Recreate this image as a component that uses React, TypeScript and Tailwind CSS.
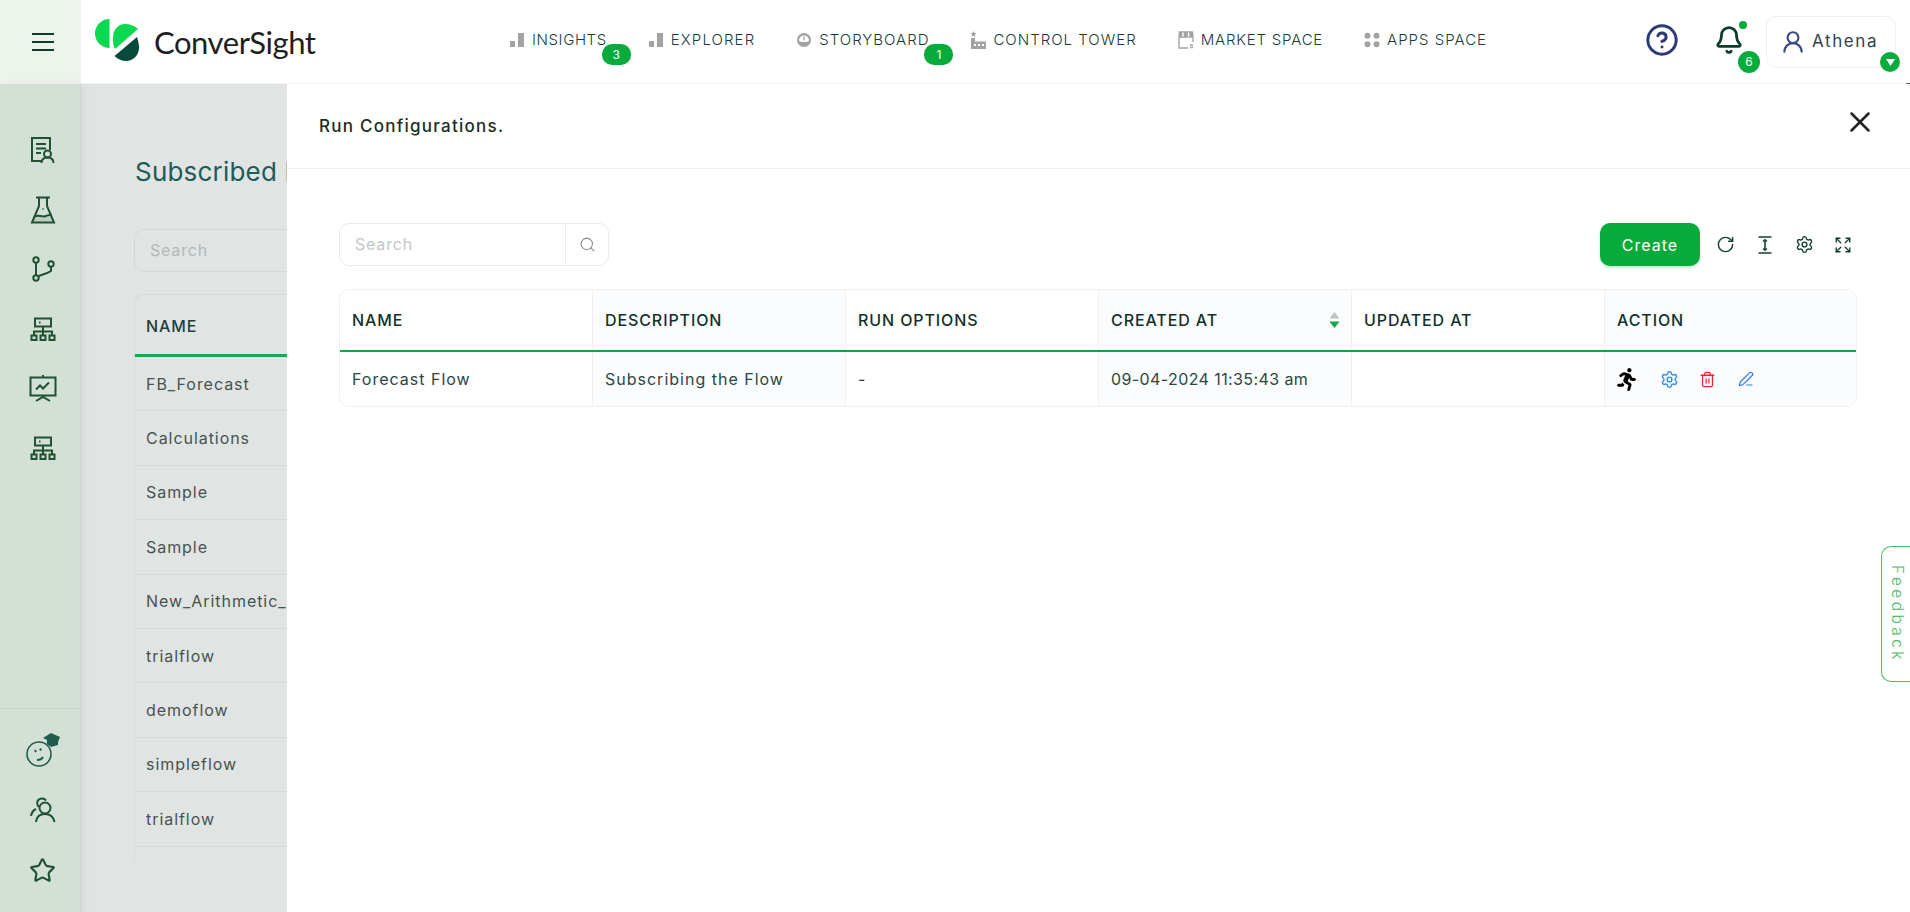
import React from "react";
import { CircleHelp, Bell, UserRound, X, Search, RotateCw, Settings, Expand, Trash2, PenLine, Star } from "lucide-react";
import { FaRunning } from "react-icons/fa";

const font = "font-['Inter','Noto_Sans',sans-serif]";
const sideStroke = "#1f5133";

function Logo() {
  return (
    <svg width="44" height="42" viewBox="0 0 44 42" className="shrink-0">
      <path d="M14.5 0A14.5 14.5 0 0 0 14.5 29Z" fill="#0bd94f" />
      <path d="M43 10C39 6.500 35 5 30 5C23 5 18 11 18 18C18 23 18 27 20 30Z" fill="#0bd94f" />
      <path d="M42 18L19.500 37C23 40.500 27 42 31 42C38 42 44 36 44 29C44 25 43 21 42 18Z" fill="#054a3a" />
    </svg>
  );
}

const Bars = () => (
  <svg width="16" height="16" viewBox="0 0 16 16" fill="#a3a3a3"><rect x="1" y="9" width="5" height="6" /><rect x="9" y="1" width="6" height="14" /></svg>
);
const Gauge = () => (
  <svg width="16" height="16" viewBox="0 0 16 16"><circle cx="8" cy="8" r="7" fill="#a3a3a3" /><path d="M3 8.500a5 5 0 0 1 10 0c0 1-3 1.500-5 1.500s-5-.5-5-1.500Z" fill="#fff" /><path d="M8 4.500v4" stroke="#a3a3a3" strokeWidth="1.300" /></svg>
);
const Factory = () => (
  <svg width="16" height="18" viewBox="0 0 16 18" fill="#a3a3a3"><path d="M3.500 0l1 2 2 .3-1.500 1.400.4 2.100-1.900-1-1.900 1 .4-2.100L.5 2.300l2-.3Z" /><path d="M1 7h4v3.500h11V18H1Zm3 6v2h2v-2Zm4 0v2h2v-2Zm4 0v2h2v-2Z" fillRule="evenodd" /></svg>
);
const Store = () => (
  <svg width="16" height="18" viewBox="0 0 16 18" fill="none" stroke="#a3a3a3" strokeWidth="1.400"><path d="M1 7v10h9M15 7v4" /><path d="M1.500 1h13l.5 5H1Z" fill="#a3a3a3" /><path d="M5 1.500v4M10.500 1.500v4" stroke="#fff" /><path d="M12 14h3M12 16.500h3" /></svg>
);
const Dots = () => (
  <svg width="16" height="16" viewBox="0 0 16 16" fill="#a3a3a3"><circle cx="3.500" cy="3.800" r="3" /><circle cx="12.500" cy="3.800" r="3" /><circle cx="3.500" cy="12.200" r="3" /><circle cx="12.500" cy="12.200" r="3" /></svg>
);

const Cert = () => (
  <svg width="26" height="28" viewBox="0 0 26 28" fill="none" stroke={sideStroke} strokeWidth="2"><path d="M11 25H2V2h18v12" /><path d="M6 8h10M6 12.500h10M6 17h5" /><circle cx="17.500" cy="18" r="3.500" /><path d="M11.500 27c0-3.500 2.500-5.500 6-5.500s6 2 6 5.500" /></svg>
);
const Flask = () => (
  <svg width="26" height="28" viewBox="0 0 26 28" fill="none" stroke={sideStroke} strokeWidth="2"><path d="M6 1.500h14M9 2v8L2 26.500h22L17 10V2" /><path d="M4 21c5-3.500 7 1 12-1 3-1 4-1.500 5.500-1.500" /><path d="M2.500 26h21l-2-7c-5 0-6 3-10 2-3-.7-5-.5-7 1Z" fill={sideStroke} fillOpacity="0.12" stroke="none" /><circle cx="13" cy="13" r="0.800" fill={sideStroke} stroke="none" /></svg>
);
const Branch = () => (
  <svg width="24" height="26" viewBox="0 0 24 26" fill="none" stroke={sideStroke} strokeWidth="2"><circle cx="5" cy="4" r="2.700" /><circle cx="5" cy="22" r="2.700" /><circle cx="20" cy="8" r="2.700" /><path d="M5 7v12M7.500 20c6-2 9-2.500 12.500-5v-4" /></svg>
);
const Hier = () => (
  <svg width="26" height="24" viewBox="0 0 26 24" fill="none" stroke={sideStroke} strokeWidth="2"><rect x="5" y="1.500" width="16" height="8" /><path d="M13 9.500v5M4 19v-4.500h18V19M13 14.500V19" /><rect x="1.500" y="18.500" width="5" height="4.500" /><rect x="10.500" y="18.500" width="5" height="4.500" /><rect x="19.500" y="18.500" width="5" height="4.500" /><path d="M9 5.500h1.500" /></svg>
);
const Board = () => (
  <svg width="28" height="28" viewBox="0 0 28 28" fill="none" stroke={sideStroke} strokeWidth="2"><path d="M14 1v2M1.500 3.500h25v18h-25ZM14 21.500v2M7 27l7-4 7 4" /><path d="M7 15.500l4-4 3 3 6-6" /></svg>
);
const Smile = () => (
  <svg width="36" height="36" viewBox="0 0 36 36" fill="none" stroke="#1f5c4c" strokeWidth="1.600"><circle cx="14" cy="22" r="12" /><path d="M10 18l1 2M15 16.500l1 2M12 28c3 0 5-1 6-3" strokeWidth="2" /><path d="M18 6l8-5 9 4-2 5v3l-7 2-4-3v-4Z" fill="#1f5c4c" stroke="none" /></svg>
);
const Users = () => (
  <svg width="28" height="26" viewBox="0 0 28 26" fill="none" stroke={sideStroke} strokeWidth="2"><circle cx="16" cy="11" r="5.500" /><path d="M7 25c.5-5 4-8 9-8s8.500 3 9.500 8" /><path d="M9.500 10C7 6.500 8 2 12.500 1.500c2-.2 3.500.5 4.500 2" /><path d="M2 19c.5-3 2-5.500 5-7" /></svg>
);
const TextHeight = () => (
  <svg width="16" height="18" viewBox="0 0 16 18" fill="none" stroke="#14402f" strokeWidth="1.600"><path d="M1.500 1h13M1.500 17h13M8 4v10" /><path d="M6 5.500L8 3.500l2 2M6 12.500l2 2 2-2" strokeWidth="1.200" /></svg>
);
const Sort = () => (
  <svg width="13" height="18" viewBox="0 0 13 18"><path d="M6.500 1l5 6.500h-10Z" fill="#b9c3bf" /><path d="M6.500 17l5-6.500h-10Z" fill="#0aaa3c" /></svg>
);

function Nav({ icon, label, badge, track }: { icon: React.ReactNode; label: string; badge?: string; track: string }) {
  return (
    <div className="relative flex items-center gap-[7px] h-6">
      {icon}
      <span className={`text-[15px] font-light text-[#163b38] whitespace-nowrap ${track}`}>{label}</span>
      {badge && (
        <span className="absolute top-[16px] right-[-24px] h-[21px] w-[29px] rounded-[10px] bg-[#07ab3b] text-white text-[12px] flex items-center justify-center">{badge}</span>
      )}
    </div>
  );
}

const bgRows = ["FB_Forecast", "Calculations", "Sample", "Sample", "New_Arithmetic_", "trialflow", "demoflow", "simpleflow", "trialflow"];
const heads = ["NAME", "DESCRIPTION", "RUN OPTIONS", "CREATED AT", "UPDATED AT", "ACTION"];

export default function App() {
  return (
    <div className={`h-screen w-full overflow-hidden flex flex-col bg-white relative ${font}`}>
      <header className="h-[84px] shrink-0 flex border-b border-[#f4f4f4] relative">
        <div className="w-[81px] shrink-0 bg-[#ebf5ec] flex items-center justify-center pl-[5px]">
          <svg width="24" height="20" viewBox="0 0 24 20" stroke="#0e3b2a" strokeWidth="2.200"><path d="M1 2h22M1 10h22M1 18h22" /></svg>
        </div>
        <div className="flex items-start pl-[14px] pt-[19px] gap-[15px] w-[428px] shrink-0">
          <Logo />
          <span className="text-[31px] leading-[46px] tracking-[-0.45px] font-normal text-[#1f1f1f] font-['Lato','Inter',sans-serif]">ConverSight</span>
        </div>
        <nav className="flex items-start gap-[41px] pt-[28px]">
          <Nav icon={<Bars />} label="INSIGHTS" badge="3" track="tracking-[0.6px]" />
          <Nav icon={<Bars />} label="EXPLORER" track="tracking-[1.1px]" />
          <Nav icon={<Gauge />} label="STORYBOARD" badge="1" track="tracking-[1px]" />
          <Nav icon={<Factory />} label="CONTROL TOWER" track="tracking-[1px]" />
          <Nav icon={<Store />} label="MARKET SPACE" track="tracking-[0.8px]" />
          <Nav icon={<Dots />} label="APPS SPACE" track="tracking-[1px]" />
        </nav>
        <div className="ml-auto flex items-start pt-[16px] pr-[14px]">
          <CircleHelp size={34} strokeWidth={2.100} color="#2e3a75" className="mt-[7px] mr-[35px]" />
          <div className="relative mr-[22px] mt-[9px]">
            <Bell size={30} strokeWidth={2.200} color="#0b3d2e" />
            <span className="absolute -top-[4px] right-[-3px] h-2 w-2 rounded-full bg-[#07ab3b]" />
            <span className="absolute top-[26px] right-[-16px] h-[22px] w-[22px] rounded-full bg-[#07ab3b] text-white text-[12px] flex items-center justify-center">6</span>
          </div>
          <div className="relative h-[52px] w-[130px] border border-[#efefef] rounded-[10px] flex items-center pl-[13px] gap-[6px]">
            <UserRound size={26} strokeWidth={2} color="#3a4a85" />
            <span className="text-[17px] tracking-[1.600px] text-[#33424a]">Athena</span>
            <span className="absolute right-[-5px] bottom-[-5px] h-[20px] w-[20px] rounded-full bg-[#07ab3b] flex items-center justify-center">
              <svg width="11" height="9" viewBox="0 0 11 9"><path d="M1 1h9L5.500 8Z" fill="#fff" /></svg>
            </span>
          </div>
        </div>
        <span className="absolute right-0 bottom-[-1px] h-px w-[4px] bg-[#666]" />
      </header>

      <div className="flex-1 flex min-h-0">
        <aside className="w-[81px] shrink-0 bg-[#d2e0d6] border-r border-[#c9d8ce] flex flex-col justify-between items-center relative z-10 shadow-[3px_0_10px_rgba(0,0,0,0.05)]">
          <div className="flex flex-col items-center gap-[29.500px] pt-[51px] pl-[5px]">
            {[<Cert />, <Flask />, <Branch />, <Hier />, <Board />, <Hier />].map((ic, i) => (
              <div key={i} className="h-[30px] w-[30px] flex items-center justify-center">{ic}</div>
            ))}
          </div>
          <div className="w-full border-t border-[#c9d8ce] flex flex-col items-center gap-[30px] pt-[26px] pb-[27px] pl-[5px]">
            <div className="h-[30px] flex items-center justify-center"><Smile /></div>
            <div className="h-[30px] flex items-center justify-center"><Users /></div>
            <div className="h-[30px] flex items-center justify-center"><Star size={27} strokeWidth={1.900} color={sideStroke} /></div>
          </div>
        </aside>

        <section className="w-[206px] shrink-0 bg-[#e0e4e3] overflow-hidden pl-[54px] pt-[71px]">
          <div className="w-[800px]">
            <h1 className="text-[26px] leading-[34px] tracking-[0.2px] font-normal text-[#1f5c56]">Subscribed Flows</h1>
            <div className="mt-[40px] -ml-[1px] h-[43px] w-[300px] border border-[#d3d8d6] rounded-[10px] flex items-center pl-[15px] pb-[2px] text-[16px] tracking-[0.8px] text-[#b3b9b7]">Search</div>
            <div className="mt-[22px] -ml-[1px] rounded-t-[10px] border-l border-t border-[#d6dbd9] w-[400px] h-[568px]">
              <div className="h-[62px] flex items-center pl-[11px] pt-[2px] text-[16px] tracking-[0.9px] font-medium text-[#203f3c] border-b-[3px] border-[#1ea550]">NAME</div>
              {bgRows.map((r, i) => (
                <div key={i} className="h-[54.400px] flex items-center pl-[11px] text-[16px] tracking-[0.95px] text-[#47534f] border-b border-[#d6dbd9]">{r}</div>
              ))}
            </div>
          </div>
        </section>

        <main className="flex-1 min-w-0 bg-white flex flex-col">
          <div className="h-[85px] shrink-0 border-b border-[#efefef] flex items-center justify-between pl-[32px] pr-[33px]">
            <h2 className="text-[17px] tracking-[1.250px] font-medium text-[#1e2d1f] mt-[2px]">Run Configurations.</h2>
            <X size={34} strokeWidth={1.800} color="#222" className="-mt-[8px]" />
          </div>
          <div className="pl-[52px] pr-[53px] pt-[54px]">
            <div className="flex items-center justify-between">
              <div className="h-[43px] w-[270px] border border-[#ebebeb] rounded-[10px] flex">
                <div className="flex-1 flex items-center pl-[15px] pb-[2px] text-[16px] tracking-[0.8px] text-[#c6c6c6]">Search</div>
                <div className="w-[43px] border-l border-[#ebebeb] flex items-center justify-center"><Search size={17} strokeWidth={1.500} color="#8a8a8a" /></div>
              </div>
              <div className="flex items-center">
                <button className="h-[43px] w-[100px] rounded-[10px] bg-[#07ab3b] text-white text-[16px] tracking-[1px] font-normal shadow-[0_2px_3px_rgba(7,171,59,0.25)]">Create</button>
                <div className="flex items-center gap-[22px] ml-[16px] mr-[5px]">
                  <RotateCw size={19} strokeWidth={1.800} color="#14402f" />
                  <TextHeight />
                  <Settings size={19} strokeWidth={1.800} color="#14402f" />
                  <Expand size={18} strokeWidth={1.800} color="#14402f" className="-ml-[2px]" />
                </div>
              </div>
            </div>

            <div className="mt-[23px] border border-[#efefef] rounded-[10px] overflow-hidden grid grid-cols-[253px_253px_253px_253px_253px_1fr]">
              {heads.map((h, i) => (
                <div key={h} className={`relative h-[62px] border-b-[2px] border-[#0aaa3c] flex items-center pl-[12px] pb-[1px] text-[16px] tracking-[0.9px] font-medium text-[#12312e] whitespace-nowrap ${i % 2 ? "bg-[#fbfcfe]" : "bg-white"}`}>
                  {h}
                  {i < 5 && <span className="absolute right-0 top-0 bottom-0 w-px bg-[#efefef]" />}
                  {h === "CREATED AT" && <span className="absolute right-[11px] top-[21px]"><Sort /></span>}
                </div>
              ))}
              {["Forecast Flow", "Subscribing the Flow", "-", "09-04-2024 11:35:43 am", ""].map((c, i) => (
                <div key={i} className={`h-[54px] flex items-center pl-[12px] pb-[1px] text-[16px] ${c.startsWith("09") ? "tracking-[0.4px]" : "tracking-[1px]"} text-[#2c4642] border-r border-[#efefef] whitespace-nowrap ${i % 2 ? "bg-[#fbfcfe]" : "bg-white"}`}>{c}</div>
              ))}
              <div className="h-[54px] flex items-center pl-[12px] gap-[20px] bg-[#fbfcfe]">
                <FaRunning size={23} color="#000" className="-ml-[2px] mr-[2px]" />
                <Settings size={19} strokeWidth={1.800} color="#2f8bf5" />
                <Trash2 size={17} strokeWidth={1.800} color="#f5222d" />
                <PenLine size={16} strokeWidth={1.800} color="#2f7bf5" className="ml-[2px]" />
              </div>
            </div>
          </div>
        </main>
      </div>

      <div className="absolute right-0 top-[546px] h-[136px] w-[29px] border border-r-0 border-[#4cb963] rounded-l-[10px] bg-white flex items-center justify-center pl-[2px]">
        <span className="[writing-mode:vertical-rl] text-[15.500px] tracking-[3.400px] font-light text-[#4cb963]">Feedback</span>
      </div>
    </div>
  );
}
